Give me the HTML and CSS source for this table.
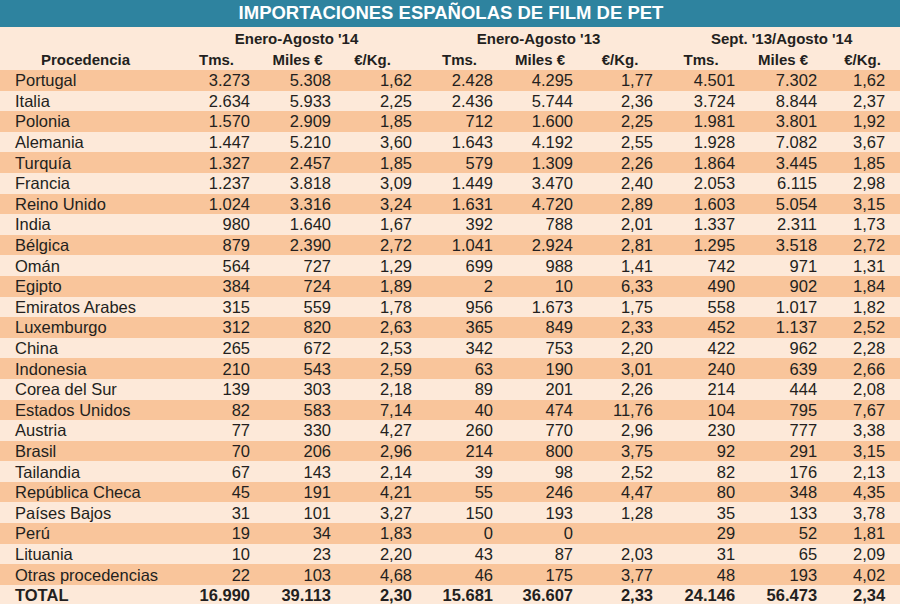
FILE: index.html
```html
<!DOCTYPE html>
<html lang="es">
<head>
<meta charset="utf-8">
<title>Importaciones españolas de film de PET</title>
<link rel="stylesheet" href="styles.css">
</head>
<body>
<div class="page">
  <h1 class="title">IMPORTACIONES ESPAÑOLAS DE FILM DE PET</h1>
  <table class="data">
    <colgroup>
      <col class="c-name"><col class="c81"><col class="c81"><col class="c81"><col class="c81"><col class="c80"><col class="c80"><col class="c82"><col class="c82"><col class="c77">
    </colgroup>
    <thead>
      <tr class="group">
        <th></th>
        <th colspan="3">Enero-Agosto '14</th>
        <th colspan="3">Enero-Agosto '13</th>
        <th colspan="3" class="g3">Sept. '13/Agosto '14</th>
      </tr>
      <tr class="cols">
        <th class="proc">Procedencia</th>
        <th>Tms.</th><th>Miles €</th><th class="kg1">€/Kg.</th>
        <th>Tms.</th><th>Miles €</th><th>€/Kg.</th>
        <th>Tms.</th><th>Miles €</th><th class="last">€/Kg.</th>
      </tr>
    </thead>
    <tbody>
      <tr class="o"><td>Portugal</td><td>3.273</td><td>5.308</td><td>1,62</td><td>2.428</td><td>4.295</td><td>1,77</td><td>4.501</td><td>7.302</td><td>1,62</td></tr>
      <tr><td>Italia</td><td>2.634</td><td>5.933</td><td>2,25</td><td>2.436</td><td>5.744</td><td>2,36</td><td>3.724</td><td>8.844</td><td>2,37</td></tr>
      <tr class="o"><td>Polonia</td><td>1.570</td><td>2.909</td><td>1,85</td><td>712</td><td>1.600</td><td>2,25</td><td>1.981</td><td>3.801</td><td>1,92</td></tr>
      <tr><td>Alemania</td><td>1.447</td><td>5.210</td><td>3,60</td><td>1.643</td><td>4.192</td><td>2,55</td><td>1.928</td><td>7.082</td><td>3,67</td></tr>
      <tr class="o"><td>Turquía</td><td>1.327</td><td>2.457</td><td>1,85</td><td>579</td><td>1.309</td><td>2,26</td><td>1.864</td><td>3.445</td><td>1,85</td></tr>
      <tr><td>Francia</td><td>1.237</td><td>3.818</td><td>3,09</td><td>1.449</td><td>3.470</td><td>2,40</td><td>2.053</td><td>6.115</td><td>2,98</td></tr>
      <tr class="o"><td>Reino Unido</td><td>1.024</td><td>3.316</td><td>3,24</td><td>1.631</td><td>4.720</td><td>2,89</td><td>1.603</td><td>5.054</td><td>3,15</td></tr>
      <tr><td>India</td><td>980</td><td>1.640</td><td>1,67</td><td>392</td><td>788</td><td>2,01</td><td>1.337</td><td>2.311</td><td>1,73</td></tr>
      <tr class="o"><td>Bélgica</td><td>879</td><td>2.390</td><td>2,72</td><td>1.041</td><td>2.924</td><td>2,81</td><td>1.295</td><td>3.518</td><td>2,72</td></tr>
      <tr><td>Omán</td><td>564</td><td>727</td><td>1,29</td><td>699</td><td>988</td><td>1,41</td><td>742</td><td>971</td><td>1,31</td></tr>
      <tr class="o"><td>Egipto</td><td>384</td><td>724</td><td>1,89</td><td>2</td><td>10</td><td>6,33</td><td>490</td><td>902</td><td>1,84</td></tr>
      <tr><td>Emiratos Arabes</td><td>315</td><td>559</td><td>1,78</td><td>956</td><td>1.673</td><td>1,75</td><td>558</td><td>1.017</td><td>1,82</td></tr>
      <tr class="o"><td>Luxemburgo</td><td>312</td><td>820</td><td>2,63</td><td>365</td><td>849</td><td>2,33</td><td>452</td><td>1.137</td><td>2,52</td></tr>
      <tr><td>China</td><td>265</td><td>672</td><td>2,53</td><td>342</td><td>753</td><td>2,20</td><td>422</td><td>962</td><td>2,28</td></tr>
      <tr class="o"><td>Indonesia</td><td>210</td><td>543</td><td>2,59</td><td>63</td><td>190</td><td>3,01</td><td>240</td><td>639</td><td>2,66</td></tr>
      <tr><td>Corea del Sur</td><td>139</td><td>303</td><td>2,18</td><td>89</td><td>201</td><td>2,26</td><td>214</td><td>444</td><td>2,08</td></tr>
      <tr class="o"><td>Estados Unidos</td><td>82</td><td>583</td><td>7,14</td><td>40</td><td>474</td><td>11,76</td><td>104</td><td>795</td><td>7,67</td></tr>
      <tr><td>Austria</td><td>77</td><td>330</td><td>4,27</td><td>260</td><td>770</td><td>2,96</td><td>230</td><td>777</td><td>3,38</td></tr>
      <tr class="o"><td>Brasil</td><td>70</td><td>206</td><td>2,96</td><td>214</td><td>800</td><td>3,75</td><td>92</td><td>291</td><td>3,15</td></tr>
      <tr><td>Tailandia</td><td>67</td><td>143</td><td>2,14</td><td>39</td><td>98</td><td>2,52</td><td>82</td><td>176</td><td>2,13</td></tr>
      <tr class="o"><td>República Checa</td><td>45</td><td>191</td><td>4,21</td><td>55</td><td>246</td><td>4,47</td><td>80</td><td>348</td><td>4,35</td></tr>
      <tr><td>Países Bajos</td><td>31</td><td>101</td><td>3,27</td><td>150</td><td>193</td><td>1,28</td><td>35</td><td>133</td><td>3,78</td></tr>
      <tr class="o"><td>Perú</td><td>19</td><td>34</td><td>1,83</td><td>0</td><td>0</td><td></td><td>29</td><td>52</td><td>1,81</td></tr>
      <tr><td>Lituania</td><td>10</td><td>23</td><td>2,20</td><td>43</td><td>87</td><td>2,03</td><td>31</td><td>65</td><td>2,09</td></tr>
      <tr class="o"><td>Otras procedencias</td><td>22</td><td>103</td><td>4,68</td><td>46</td><td>175</td><td>3,77</td><td>48</td><td>193</td><td>4,02</td></tr>
      <tr class="total"><td>TOTAL</td><td>16.990</td><td>39.113</td><td>2,30</td><td>15.681</td><td>36.607</td><td>2,33</td><td>24.146</td><td>56.473</td><td>2,34</td></tr>
    </tbody>
  </table>
</div>
</body>
</html>
```
FILE: styles.css
```css
html, body {
  margin: 0;
  padding: 0;
}
body {
  background: #fde9d9;
  font-family: "Liberation Sans", Arial, sans-serif;
  color: #231f20;
}
.page {
  width: 900px;
  height: 604px;
  overflow: hidden;
  background: #fde9d9;
}
.title {
  margin: 0;
  height: 27px;
  line-height: 26px;
  background: #2e839f;
  color: #ffffff;
  font-size: 18.5px;
  font-weight: bold;
  text-align: center;
  padding-left: 2px;
}
.data {
  width: 900px;
  border-collapse: collapse;
  table-layout: fixed;
  font-size: 16.5px;
}
.c-name { width: 175px; }
.c81 { width: 81px; }
.c80 { width: 80px; }
.c82 { width: 82px; }
.c77 { width: 77px; }
.data th {
  font-weight: bold;
  font-size: 15px;
  padding: 0;
  text-align: center;
  height: 21px;
  line-height: 21px;
}
.data tr.group th {
  padding-top: 1px;
  height: 20px;
}
.data tr.group th.g3 { padding-left: 4px; }
.data tr.cols th { padding-left: 2px; }
.data tr.cols th.proc { padding-left: 0; padding-right: 4px; }
.data tr.cols th.kg1 { padding-right: 12px; }
.data tr.cols th.last { padding-right: 0; }
.data td {
  padding: 0 6px 0 0;
  height: 20.6px;
  line-height: 20px;
  text-align: right;
  white-space: nowrap;
}
.data td:first-child {
  text-align: left;
  padding: 0 0 0 15px;
}
.data td:last-child {
  padding-right: 15px;
}
.data tr.o td {
  background: #f9c59b;
}
.data tr.total td {
  font-weight: bold;
}
```
